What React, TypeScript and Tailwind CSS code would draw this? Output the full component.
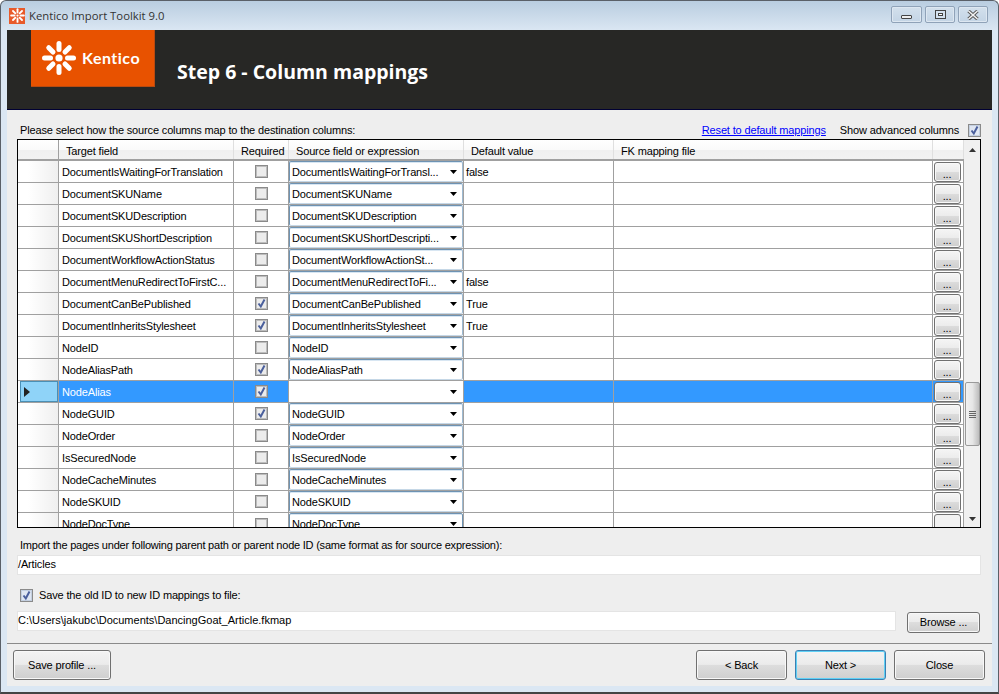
import React from 'react';

type Row = {
  target: string;
  required: boolean;
  source: string;
  value?: string;
  selected?: boolean;
};

const rows: Row[] = [
  { target: 'DocumentIsWaitingForTranslation', required: false, source: 'DocumentIsWaitingForTransl...', value: 'false' },
  { target: 'DocumentSKUName', required: false, source: 'DocumentSKUName' },
  { target: 'DocumentSKUDescription', required: false, source: 'DocumentSKUDescription' },
  { target: 'DocumentSKUShortDescription', required: false, source: 'DocumentSKUShortDescripti...' },
  { target: 'DocumentWorkflowActionStatus', required: false, source: 'DocumentWorkflowActionSt...' },
  { target: 'DocumentMenuRedirectToFirstC...', required: false, source: 'DocumentMenuRedirectToFi...', value: 'false' },
  { target: 'DocumentCanBePublished', required: true, source: 'DocumentCanBePublished', value: 'True' },
  { target: 'DocumentInheritsStylesheet', required: true, source: 'DocumentInheritsStylesheet', value: 'True' },
  { target: 'NodeID', required: false, source: 'NodeID' },
  { target: 'NodeAliasPath', required: true, source: 'NodeAliasPath' },
  { target: 'NodeAlias', required: true, source: '', selected: true },
  { target: 'NodeGUID', required: true, source: 'NodeGUID' },
  { target: 'NodeOrder', required: false, source: 'NodeOrder' },
  { target: 'IsSecuredNode', required: false, source: 'IsSecuredNode' },
  { target: 'NodeCacheMinutes', required: false, source: 'NodeCacheMinutes' },
  { target: 'NodeSKUID', required: false, source: 'NodeSKUID' },
];

const Flower = ({ size, r1, r2, w, c }: { size: number; r1: number; r2: number; w: number; c: number }) => (
  <svg width={size} height={size} viewBox="-20 -20 40 40" className="shrink-0">
    <circle cx="0" cy="0" r={c} fill="#fff" />
    {[0, 45, 90, 135, 180, 225, 270, 315].map((a) => (
      <line
        key={a}
        x1="0"
        y1={-r1}
        x2="0"
        y2={-r2}
        stroke="#fff"
        strokeWidth={w}
        strokeLinecap="round"
        transform={`rotate(${a})`}
      />
    ))}
  </svg>
);

const Check = ({ checked, soft }: { checked: boolean; soft?: boolean }) => (
  <span className={`flex h-[13px] w-[13px] shrink-0 items-center justify-center border border-[#8a8a8a] ${soft ? 'bg-[#dfe6f2] shadow-[inset_0_0_0_1px_#c3cfe0]' : 'bg-[#ececec] shadow-[inset_0_0_0_1px_#bdbdbd]'}`}>
    {checked && (
      <svg width="11" height="11" viewBox="0 0 11 11">
        <path d="M2.5 5.5 L4.8 8.5 L8.5 1.5" fill="none" stroke="#4a5f9c" strokeWidth="2" />
      </svg>
    )}
  </span>
);

const Button = ({ label, className, focused }: { label: string; className: string; focused?: boolean }) => (
  <button
    className={`rounded-[3px] border bg-[linear-gradient(#f3f3f3_0%,#ebebeb_48%,#dddddd_50%,#cfcfcf_100%)] text-black ${focused ? 'border-[#3c7fb1] shadow-[inset_0_0_0_1px_#5fd0f5]' : 'border-[#707070] shadow-[inset_0_0_0_1px_#f8f8f8]'} ${className}`}
  >
    {label}
  </button>
);

const Arrow = () => (
  <svg width="7" height="4" viewBox="0 0 7 4" className="shrink-0">
    <path d="M0 0 H7 L3.5 4 Z" fill="#000" />
  </svg>
);

const GridRow = ({ row }: { row: Row }) => {
  const sel = row.selected;
  return (
    <div className={`flex h-[22px] shrink-0 border-b border-[#a0a0a0] ${sel ? 'bg-[#3399ff] text-white' : 'bg-white text-black'}`}>
      <div className="w-[41px] shrink-0 border-r border-[#a0a0a0] bg-[linear-gradient(90deg,#ffffff_25%,#efefef_100%)]">
        {sel && (
          <div className="ml-[2px] flex h-[21px] w-[38px] items-center border border-[#4a8fb5] bg-[#8fd3f8] pl-[3px]">
            <svg width="6" height="10" viewBox="0 0 6 10">
              <path d="M0 0 L6 5 L0 10 Z" fill="#222" />
            </svg>
          </div>
        )}
      </div>
      <div className="flex w-[175px] shrink-0 items-center overflow-hidden whitespace-nowrap border-r border-[#a0a0a0] pl-[3px] pt-[1px]">{row.target}</div>
      <div className="flex w-[55px] shrink-0 items-center justify-center border-r border-[#a0a0a0]">
        <Check checked={row.required} />
      </div>
      <div className="w-[175px] shrink-0 border-r border-[#a0a0a0] bg-white text-black">
        {!sel ? (
          <div className="flex h-[21px] items-center justify-between rounded-[2px] border border-[#6e93b3] border-b-[#c5d7e6] border-r-[#9dbad2] pl-[2px] pr-[5px] pt-[1px] shadow-[inset_0_1px_0_#d8e6f2]">
            <span className="whitespace-nowrap">{row.source}</span>
            <Arrow />
          </div>
        ) : (
          <div className="flex h-[21px] items-center justify-end pr-[6px]">
            <Arrow />
          </div>
        )}
      </div>
      <div className="flex w-[150px] shrink-0 items-center border-r border-[#a0a0a0] pl-[2px] pt-[1px]">{row.value}</div>
      <div className="w-[319px] shrink-0 border-r border-[#a0a0a0]" />
      <div className="flex w-[31px] shrink-0 items-center justify-center border-r border-[#a0a0a0] pr-[2px]">
        <div className="flex h-[20px] w-[27px] items-end justify-center rounded-[3px] border border-[#707070] bg-[linear-gradient(#f5f5f5_0%,#ececec_48%,#dcdcdc_50%,#cdcdcd_100%)] text-[11px] leading-[14px] text-black shadow-[inset_0_0_0_1px_#f8f8f8]">
          ...
        </div>
      </div>
    </div>
  );
};

// last row sits half under the grid's bottom edge, like the reference
const ClippedRow = () => (
  <div className="flex h-[22px] shrink-0 bg-white">
    <div className="w-[41px] shrink-0 border-r border-[#a0a0a0] bg-[linear-gradient(90deg,#ffffff_25%,#efefef_100%)]" />
    <div className="flex w-[175px] shrink-0 items-start border-r border-[#a0a0a0] pl-[3px] pt-[6px]">NodeDocType</div>
    <div className="flex w-[55px] shrink-0 items-center justify-center border-r border-[#a0a0a0]"><Check checked={false} /></div>
    <div className="w-[175px] shrink-0 border-r border-[#a0a0a0]">
      <div className="flex h-[21px] items-center justify-between rounded-[2px] border border-[#6e93b3] pl-[2px] pr-[5px] pt-[1px] shadow-[inset_0_1px_0_#d8e6f2]">
        <span>NodeDocType</span>
        <Arrow />
      </div>
    </div>
    <div className="w-[150px] shrink-0 border-r border-[#a0a0a0]" />
    <div className="w-[319px] shrink-0 border-r border-[#a0a0a0]" />
    <div className="flex w-[31px] shrink-0 items-start justify-center border-r border-[#a0a0a0] pr-[2px] pt-[1px]">
      <div className="h-[20px] w-[27px] rounded-[3px] border border-[#707070] bg-[#f2f2f2]" />
    </div>
  </div>
);

const HeaderCell = ({ label, className }: { label?: string; className: string }) => (
  <div className={`flex shrink-0 items-center whitespace-nowrap border-r border-[#dfdfdf] pt-[3px] ${className}`}>{label}</div>
);

const Scrollbar = () => (
  <div className="flex w-[16px] shrink-0 flex-col items-center bg-[#f0f0f0]">
    <div className="flex h-[20px] items-center justify-center">
      <svg width="7" height="4" viewBox="0 0 7 4"><path d="M0 4 L3.5 0 L7 4 Z" fill="#333" /></svg>
    </div>
    <div className="h-[222px]" />
    <div className="flex h-[64px] w-[15px] shrink-0 flex-col items-center justify-center gap-[1px] rounded-[2px] border border-[#9a9a9a] bg-[linear-gradient(90deg,#f2f2f2_0%,#e6e6e6_50%,#bdbdbd_100%)]">
      <span className="h-px w-[7px] bg-[#666]" />
      <span className="h-px w-[7px] bg-[#666]" />
      <span className="h-px w-[7px] bg-[#666]" />
      <span className="h-px w-[7px] bg-[#666]" />
    </div>
    <div className="flex flex-1 items-end justify-center pb-[6px]">
      <svg width="7" height="4" viewBox="0 0 7 4"><path d="M0 0 L7 0 L3.5 4 Z" fill="#333" /></svg>
    </div>
  </div>
);

const WinButton = ({ children, className }: { children: React.ReactNode; className: string }) => (
  <div className={`flex h-[17px] items-center justify-center rounded-[2px] border border-[#8fa2b8] bg-[linear-gradient(#d3e0ec,#c3d4e5)] shadow-[inset_0_0_0_1px_#dde7f1] ${className}`}>
    {children}
  </div>
);

export default function App() {
  return (
    <div className="flex h-[694px] w-[999px] flex-col overflow-hidden rounded-t-[6px] border border-b-2 border-[#5a6068] border-b-[#444] bg-[linear-gradient(#b9cde0_0px,#dbe7f3_30px)] font-['Liberation_Sans',sans-serif] text-[11px] leading-none tracking-[-0.15px]">
      {/* title bar */}
      <div className="flex h-[29px] shrink-0 items-center pl-[8px] pr-[10px]">
        <div className="flex h-[16px] w-[16px] items-center justify-center bg-[#e85a2a]">
          <Flower size={15} r1={8} r2={17} w={5} c={3} />
        </div>
        <span className="ml-[4px] font-['Open_Sans',sans-serif] text-[11.3px] tracking-normal text-[#333]">Kentico Import Toolkit 9.0</span>
        <div className="ml-auto mt-[-2px] flex gap-[3px]">
          <WinButton className="w-[31px]">
            <span className="mt-[4px] h-[4px] w-[11px] rounded-[1px] border border-[#444] bg-[#eee]" />
          </WinButton>
          <WinButton className="w-[30px]">
            <span className="flex h-[9px] w-[11px] items-center justify-center border border-[#444] bg-[#d5e1ee]">
              <span className="h-[3px] w-[5px] border border-[#444] bg-white" />
            </span>
          </WinButton>
          <WinButton className="w-[30px]">
            <svg width="14" height="10" viewBox="0 0 14 10">
              <path d="M2.5 1 L11.5 9 M11.5 1 L2.5 9" stroke="#555" strokeWidth="3.4" />
              <path d="M2.5 1 L11.5 9 M11.5 1 L2.5 9" stroke="#f2f2f2" strokeWidth="1.6" />
            </svg>
          </WinButton>
        </div>
      </div>

      <div className="mx-[6px] flex flex-1 flex-col bg-[#eeeeee]">
        {/* header band */}
        <div className="flex h-[80px] shrink-0 items-start border-b border-[#000033] bg-[#272725]">
          <div className="ml-[24px] flex h-[57px] w-[124px] items-center gap-[3px] border-b border-r border-[#b84a10] bg-[#e85200] pl-[8px]">
            <Flower size={40} r1={8.5} r2={14.5} w={5} c={3.6} />
            <span className="font-['Lato',sans-serif] text-[16px] font-bold tracking-[0.5px] text-white">Kentico</span>
          </div>
          <div className="ml-[22px] mt-[30px] font-['Open_Sans',sans-serif] text-[19.5px] leading-[24px] font-bold tracking-normal text-white">Step 6 - Column mappings</div>
        </div>

        {/* grid caption */}
        <div className="flex h-[29px] shrink-0 items-end pb-[3px] pl-[13px] pr-[11px]">
          <span>Please select how the source columns map to the destination columns:</span>
          <a className="ml-auto text-[#0000ff] underline">Reset to default mappings</a>
          <span className="ml-[14px]">Show advanced columns</span>
          <span className="ml-[9px] mb-[-1px]"><Check checked soft /></span>
        </div>

        {/* grid */}
        <div className="mx-[10px] flex h-[389px] w-[964px] shrink-0 overflow-hidden border border-black">
          <div className="flex w-[946px] shrink-0 flex-col">
            <div className="flex h-[21px] shrink-0 border-b-2 border-[#a0a0a0] bg-[linear-gradient(#ffffff_0%,#fafafa_50%,#f0f0f0_55%,#f2f2f2_100%)]">
              <HeaderCell className="w-[41px] !border-[#a0a0a0]" />
              <HeaderCell label="Target field" className="w-[175px] pl-[7px]" />
              <HeaderCell label="Required" className="w-[55px] pl-[7px]" />
              <HeaderCell label="Source field or expression" className="w-[175px] pl-[7px]" />
              <HeaderCell label="Default value" className="w-[150px] pl-[7px]" />
              <HeaderCell label="FK mapping file" className="w-[319px] pl-[7px]" />
              <HeaderCell className="w-[31px]" />
            </div>
            {rows.map((r) => (
              <GridRow key={r.target} row={r} />
            ))}
            <ClippedRow />
          </div>
          <Scrollbar />
        </div>

        {/* parent path */}
        <div className="ml-[13px] mt-[12px] h-[14px] shrink-0 tracking-[-0.22px]">Import the pages under following parent path or parent node ID (same format as for source expression):</div>
        <div className="mx-[10px] mt-[1px] flex h-[20px] w-[964px] shrink-0 items-center border border-[#e4e4e4] bg-white pb-[2px]">/Articles</div>

        {/* fk mapping */}
        <div className="ml-[13px] mt-[14px] flex h-[13px] shrink-0 items-center gap-[6px]">
          <Check checked soft />
          <span>Save the old ID to new ID mappings to file:</span>
        </div>
        <div className="mx-[10px] mt-[9px] flex shrink-0 items-start">
          <div className="flex h-[20px] w-[879px] items-center border border-[#e4e4e4] bg-white pb-[2px] tracking-[0px]">C:\Users\jakubc\Documents\DancingGoat_Article.fkmap</div>
          <Button label="Browse ..." className="ml-[11px] mt-[1px] h-[21px] w-[73px]" />
        </div>

        {/* footer */}
        <div className="mt-[10px] flex flex-1 border-t border-[#8a8a8a] pl-[6px] pr-[7px] pt-[6px]">
          <Button label="Save profile ..." className="h-[30px] w-[98px]" />
          <Button label="< Back" className="ml-auto h-[30px] w-[91px]" />
          <Button label="Next >" focused className="ml-[8px] h-[30px] w-[91px]" />
          <Button label="Close" className="ml-[8px] h-[30px] w-[91px]" />
        </div>
      </div>
      <div className="h-[6px] shrink-0" />
    </div>
  );
}
